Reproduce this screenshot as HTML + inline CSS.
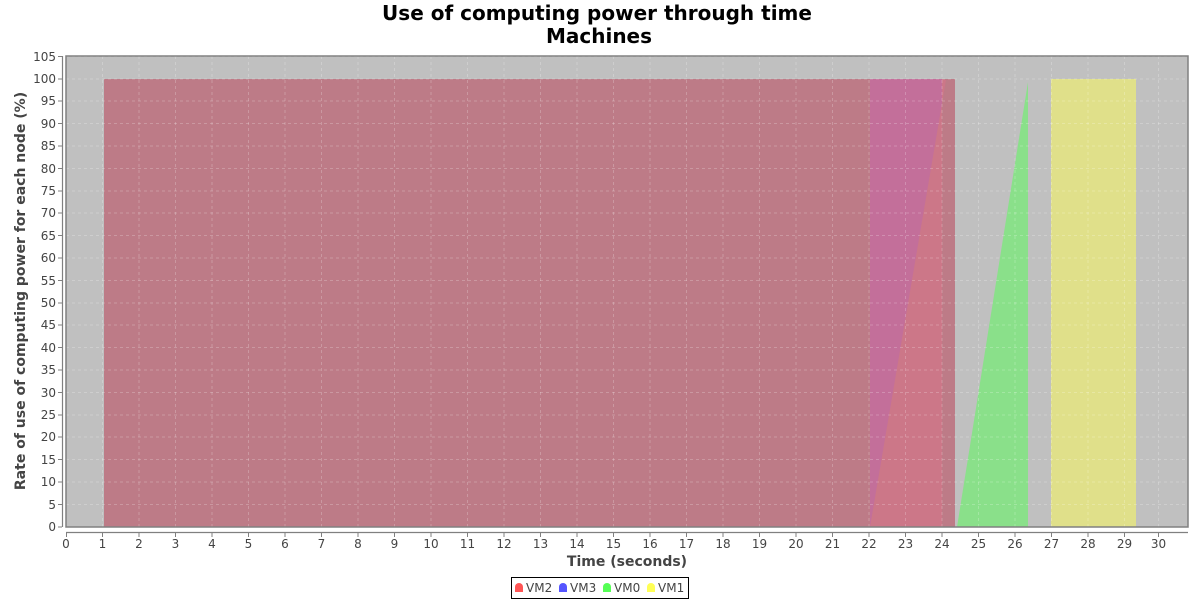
<!DOCTYPE html>
<html><head><meta charset="utf-8"><style>
html,body{margin:0;padding:0;background:#fff;width:1200px;height:600px;overflow:hidden}
svg{display:block;font-family:"DejaVu Sans","Liberation Sans",sans-serif}
</style></head><body>
<svg width="1200" height="600" viewBox="0 0 1200 600" xmlns="http://www.w3.org/2000/svg">
<text x="597" y="20" text-anchor="middle" font-size="20" font-weight="bold" fill="#000">Use of computing power through time</text>
<text x="599" y="43" text-anchor="middle" font-size="20" font-weight="bold" fill="#000">Machines</text>
<rect x="66" y="56" width="1122" height="471" fill="#c0c0c0"/>
<rect x="104" y="79" width="851" height="448" fill="#bd7b87"/>
<rect x="870" y="79" width="72" height="448" fill="#c36f9a"/>
<polygon points="870,527 946,80 942,79 942,527" fill="#cc7788"/>
<polygon points="957,527 1028,82 1028,527" fill="#8ae08a"/>
<rect x="1051" y="79" width="85" height="448" fill="#e0e08a"/>
<g stroke="#ffffff" stroke-opacity="0.22" stroke-dasharray="3,3" stroke-width="1">
<path d="M102.5 56V527M139 56V527M175.5 56V527M212 56V527M248.5 56V527M285 56V527M321.5 56V527M358 56V527M394.5 56V527M431 56V527M467.5 56V527M504 56V527M540.5 56V527M577 56V527M613.5 56V527M650 56V527M686.5 56V527M723 56V527M759.5 56V527M796 56V527M832.5 56V527M869 56V527M905.5 56V527M942 56V527M978.5 56V527M1015 56V527M1051.5 56V527M1088 56V527M1124.5 56V527M1158.5 56V527"/>
<path d="M66 504.5H1188M66 482H1188M66 459.5H1188M66 437H1188M66 415H1188M66 392.5H1188M66 370H1188M66 347.5H1188M66 325H1188M66 303H1188M66 280.5H1188M66 258H1188M66 235.5H1188M66 213H1188M66 191H1188M66 168.5H1188M66 146H1188M66 123.5H1188M66 101H1188M66 79H1188M66 56.5H1188"/>
</g>
<rect x="66" y="56" width="1122" height="471" fill="none" stroke="#808080" stroke-width="1.5"/>
<path d="M62.5 56V527M66 532.5H1188" stroke="#808080" stroke-width="1.2" fill="none"/>
<g stroke="#808080" stroke-width="1">
<path d="M58 527H62M58 504.5H62M58 482H62M58 459.5H62M58 437H62M58 415H62M58 392.5H62M58 370H62M58 347.5H62M58 325H62M58 303H62M58 280.5H62M58 258H62M58 235.5H62M58 213H62M58 191H62M58 168.5H62M58 146H62M58 123.5H62M58 101H62M58 79H62M58 56.5H62"/>
<path d="M66.5 533V537M102.5 533V537M139 533V537M175.5 533V537M212 533V537M248.5 533V537M285 533V537M321.5 533V537M358 533V537M394.5 533V537M431 533V537M467.5 533V537M504 533V537M540.5 533V537M577 533V537M613.5 533V537M650 533V537M686.5 533V537M723 533V537M759.5 533V537M796 533V537M832.5 533V537M869 533V537M905.5 533V537M942 533V537M978.5 533V537M1015 533V537M1051.5 533V537M1088 533V537M1124.5 533V537M1158.5 533V537"/>
</g>
<g font-size="12" fill="#444" text-anchor="end">
<text x="56" y="531">0</text><text x="56" y="509">5</text><text x="56" y="486">10</text><text x="56" y="464">15</text><text x="56" y="441">20</text><text x="56" y="419">25</text><text x="56" y="397">30</text><text x="56" y="374">35</text><text x="56" y="352">40</text><text x="56" y="329">45</text><text x="56" y="307">50</text><text x="56" y="285">55</text><text x="56" y="262">60</text><text x="56" y="240">65</text><text x="56" y="217">70</text><text x="56" y="195">75</text><text x="56" y="173">80</text><text x="56" y="150">85</text><text x="56" y="128">90</text><text x="56" y="105">95</text><text x="56" y="83">100</text><text x="56" y="61">105</text>
</g>
<g font-size="12" fill="#444" text-anchor="middle">
<text x="66" y="548">0</text><text x="102.5" y="548">1</text><text x="139" y="548">2</text><text x="175.5" y="548">3</text><text x="212" y="548">4</text><text x="248.5" y="548">5</text><text x="285" y="548">6</text><text x="321.5" y="548">7</text><text x="358" y="548">8</text><text x="394.5" y="548">9</text><text x="431" y="548">10</text><text x="467.5" y="548">11</text><text x="504" y="548">12</text><text x="540.5" y="548">13</text><text x="577" y="548">14</text><text x="613.5" y="548">15</text><text x="650" y="548">16</text><text x="686.5" y="548">17</text><text x="723" y="548">18</text><text x="759.5" y="548">19</text><text x="796" y="548">20</text><text x="832.5" y="548">21</text><text x="869" y="548">22</text><text x="905.5" y="548">23</text><text x="942" y="548">24</text><text x="978.5" y="548">25</text><text x="1015" y="548">26</text><text x="1051.5" y="548">27</text><text x="1088" y="548">28</text><text x="1124.5" y="548">29</text><text x="1158.5" y="548">30</text>
</g>
<text x="627" y="566" text-anchor="middle" font-size="14" font-weight="bold" fill="#444">Time (seconds)</text>
<text transform="translate(25,291) rotate(-90)" text-anchor="middle" font-size="14" font-weight="bold" fill="#444">Rate of use of computing power for each node (%)</text>
<rect x="511.5" y="577.5" width="177" height="21" fill="#fff" stroke="#000" stroke-width="1"/>
<g font-size="12" fill="#444">
<path d="M515 592V587A4 4 0 0 1 523 587V592Z" fill="#ff5555"/><text x="526" y="592">VM2</text>
<path d="M559 592V587A4 4 0 0 1 567 587V592Z" fill="#5555ff"/><text x="570" y="592">VM3</text>
<path d="M603 592V587A4 4 0 0 1 611 587V592Z" fill="#55ff55"/><text x="614" y="592">VM0</text>
<path d="M647 592V587A4 4 0 0 1 655 587V592Z" fill="#ffff55"/><text x="658" y="592">VM1</text>
</g>
</svg>
</body></html>
